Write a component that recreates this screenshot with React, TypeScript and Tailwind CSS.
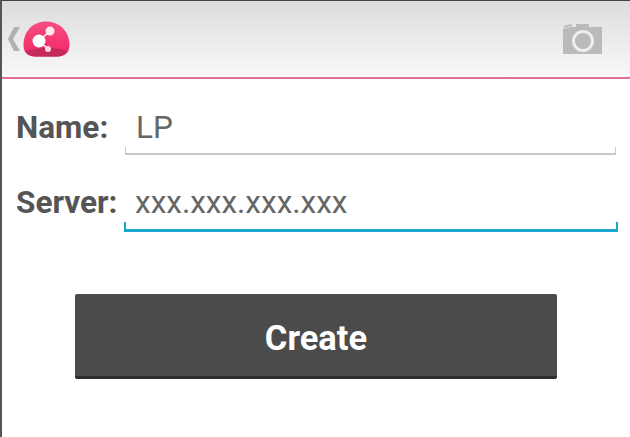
export default function App() {
  return (
    <div className="w-[630px] h-[437px] overflow-hidden bg-white border-l-2 border-[#555555] font-['Roboto',sans-serif]">
      {/* Action bar */}
      <header className="h-[79px] flex items-center justify-between pl-[6px] pr-[28px] border-t border-[#444444] border-b-2 border-b-[#e0709a] bg-gradient-to-b from-[#dcdcdc] to-[#f9f9f9]">
        <div className="flex items-center">
          <svg width="15" height="26" viewBox="0 0 15 26">
            <path d="M6 1 H12 L5 13 L12 25 H6 L0 13 Z" fill="#b0b0b0" />
          </svg>
          <svg width="47" height="36" viewBox="0 0 47 36">
            <defs>
              <linearGradient id="blob" x1="0" y1="0" x2="0" y2="1">
                <stop offset="0" stopColor="#f64f80" />
                <stop offset="0.75" stopColor="#f4306d" />
                <stop offset="1" stopColor="#d52a60" />
              </linearGradient>
            </defs>
            <path d="M0.5 24 C0.5 10 10 0.5 23 0.5 C36 0.5 46.5 10 46.5 24 C46.5 32 41 35.5 35 35.5 L12 35.5 C5 35.5 0.5 32 0.5 24 Z" fill="url(#blob)" />
            <path d="M3 30 C14 26 33 26 44 30 C41 34 38 35.5 35 35.5 L12 35.5 C9 35.5 6 34 3 30 Z" fill="#c42a5a" />
            <path d="M16 20 L27 10 M16 20 L25 28" stroke="#ffffff" strokeWidth="1.5" />
            <circle cx="16" cy="20" r="6.5" fill="#ffffff" />
            <circle cx="27" cy="10" r="4.5" fill="#ffe9ef" />
            <circle cx="25" cy="28" r="3" fill="#ffd9e4" />
          </svg>
        </div>
        <svg width="39" height="30" viewBox="0 0 39 30">
          <path fill="#bababa" d="M13 0 H26 V3 H39 V30 H0 V5 L8 3 V3 H13 Z" />
          <path d="M1 3 L9 1" stroke="#bababa" strokeWidth="2" />
          <circle cx="20" cy="17" r="9.5" fill="#bababa" stroke="#eeeeee" strokeWidth="3" />
        </svg>
      </header>

      {/* Form */}
      <main>
        <div className="flex items-start pt-[27px] pl-[14px]">
          <label className="w-[109px] text-[31.5px] leading-[44px] font-bold text-[#555555]">Name:</label>
          <div className="relative w-[491px] h-[49px] pl-[11px] text-[31.5px] leading-[44px] text-[#666666] border-b-2 border-[#c8c8c8]">
            LP
            <div className="absolute left-0 bottom-0 w-px h-[6px] bg-[#c8c8c8]" />
            <div className="absolute right-0 bottom-0 w-px h-[6px] bg-[#c8c8c8]" />
          </div>
        </div>
        <div className="flex items-start pt-[26px] pl-[14px]">
          <label className="w-[108px] text-[31.5px] leading-[44px] font-bold text-[#555555]">Server:</label>
          <div className="relative w-[494px] h-[51px] pl-[11px] text-[31.5px] leading-[44px] text-[#666666] border-b-[3px] border-[#1ba6d0]">
            xxx.xxx.xxx.xxx
            <div className="absolute left-0 bottom-0 w-[2px] h-[7px] bg-[#1ba6d0]" />
            <div className="absolute right-0 bottom-0 w-[2px] h-[7px] bg-[#1ba6d0]" />
          </div>
        </div>
        <div className="pt-[62px] pl-[73px]">
          <button className="w-[482px] h-[85px] pt-[7px] rounded-[2px] bg-[#4b4b4b] border-b-[3px] border-[#2c2c2c] text-white text-[34.5px] font-bold">
            Create
          </button>
        </div>
      </main>
    </div>
  )
}
